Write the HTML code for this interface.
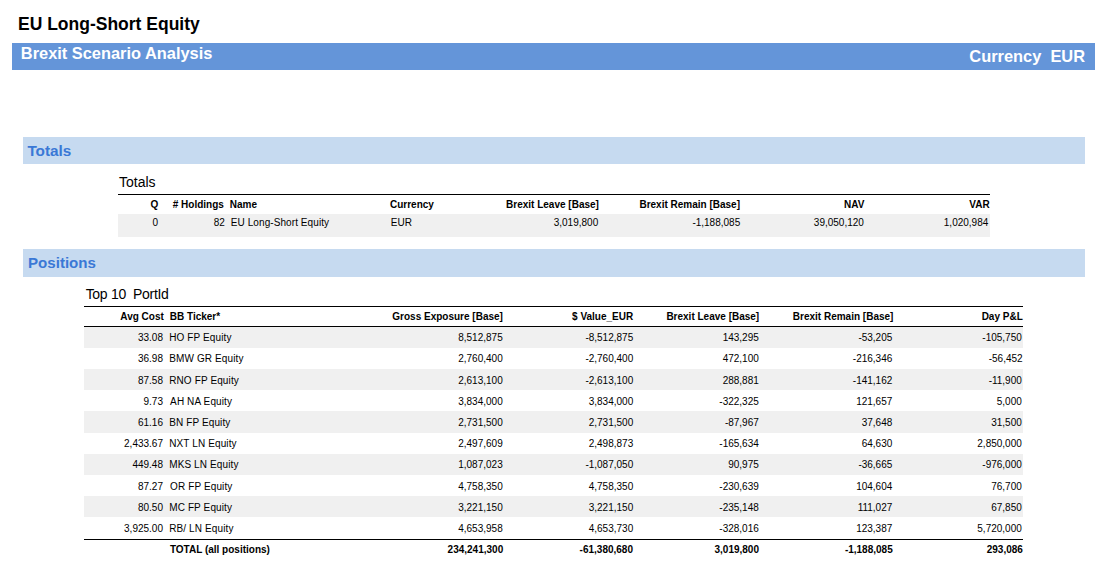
<!DOCTYPE html><html><head><meta charset="utf-8"><title>EU Long-Short Equity</title><style>
html,body{margin:0;padding:0;background:#fff;width:1107px;height:584px;overflow:hidden;position:relative}
.t{position:absolute;white-space:pre;font-family:"Liberation Sans",sans-serif;color:#000}
.r10{font-size:10px;line-height:12px}
.b10{font-size:10px;line-height:12px;font-weight:bold}
.r14{font-size:14px;line-height:16px}
.b15{font-size:15px;line-height:18px;font-weight:bold}
.b165{font-size:16.5px;line-height:18px;font-weight:bold}
.b18{font-size:18px;line-height:20px;font-weight:bold}
.k{position:absolute}
</style></head><body>
<div class="k" style="left:12px;top:43px;width:1083px;height:27px;background:#6495d9"></div>
<div class="k" style="left:23px;top:137px;width:1062px;height:27px;background:#c6daf0"></div>
<div class="k" style="left:118px;top:194px;width:872px;height:1px;background:#000"></div>
<div class="k" style="left:118px;top:214px;width:872px;height:23px;background:#f0f0f0"></div>
<div class="k" style="left:23px;top:249px;width:1062px;height:28px;background:#c6daf0"></div>
<div class="k" style="left:84px;top:306px;width:939px;height:1px;background:#000"></div>
<div class="k" style="left:84px;top:326px;width:939px;height:1px;background:#000"></div>
<div class="k" style="left:84px;top:327px;width:939px;height:21px;background:#f0f0f0"></div>
<div class="k" style="left:84px;top:369px;width:939px;height:21px;background:#f0f0f0"></div>
<div class="k" style="left:84px;top:411px;width:939px;height:22px;background:#f0f0f0"></div>
<div class="k" style="left:84px;top:454px;width:939px;height:21px;background:#f0f0f0"></div>
<div class="k" style="left:84px;top:496px;width:939px;height:21px;background:#f0f0f0"></div>
<div class="k" style="left:84px;top:539px;width:939px;height:1px;background:#000"></div>
<div class="t b18" style="left:18.00px;top:14px;font-size:17.5px">EU Long-Short Equity</div>
<div class="t b165" style="left:20.80px;top:44px;color:#fff;font-size:16.4px">Brexit Scenario Analysis</div>
<div class="t b165" style="right:22.00px;top:47px;color:#fff;font-size:16.4px">Currency&nbsp;&nbsp;EUR</div>
<div class="t b15" style="left:27.40px;top:142px;color:#3a78d6;font-size:15.3px">Totals</div>
<div class="t r14" style="left:119.00px;top:174px;">Totals</div>
<div class="t b10" style="right:948.70px;top:199px;">Q</div>
<div class="t b10" style="right:883.10px;top:199px;"># Holdings</div>
<div class="t b10" style="left:229.80px;top:199px;">Name</div>
<div class="t b10" style="left:390.00px;top:199px;">Currency</div>
<div class="t b10" style="right:508.10px;top:199px;">Brexit Leave [Base]</div>
<div class="t b10" style="right:367.00px;top:199px;">Brexit Remain [Base]</div>
<div class="t b10" style="right:242.70px;top:199px;">NAV</div>
<div class="t b10" style="right:117.40px;top:199px;">VAR</div>
<div class="t r10" style="right:948.90px;top:217px;">0</div>
<div class="t r10" style="right:882.20px;top:217px;">82</div>
<div class="t r10" style="left:230.80px;top:217px;letter-spacing:0.08px">EU Long-Short Equity</div>
<div class="t r10" style="left:390.80px;top:217px;">EUR</div>
<div class="t r10" style="right:508.80px;top:217px;">3,019,800</div>
<div class="t r10" style="right:366.80px;top:217px;">-1,188,085</div>
<div class="t r10" style="right:243.10px;top:217px;">39,050,120</div>
<div class="t r10" style="right:118.70px;top:217px;">1,020,984</div>
<div class="t b15" style="left:28.00px;top:254px;color:#3a78d6;font-size:15.1px">Positions</div>
<div class="t r14" style="left:85.65px;top:286px;letter-spacing:-0.3px">Top 10&nbsp;&nbsp;PortId</div>
<div class="t b10" style="right:943.20px;top:311px;">Avg Cost</div>
<div class="t b10" style="left:169.75px;top:311px;">BB Ticker*</div>
<div class="t b10" style="right:604.10px;top:311px;">Gross Exposure [Base]</div>
<div class="t b10" style="right:473.80px;top:311px;">$ Value_EUR</div>
<div class="t b10" style="right:347.80px;top:311px;">Brexit Leave [Base]</div>
<div class="t b10" style="right:213.60px;top:311px;">Brexit Remain [Base]</div>
<div class="t b10" style="right:84.25px;top:311px;">Day P&amp;L</div>
<div class="t r10" style="right:944.00px;top:332px;">33.08</div>
<div class="t r10" style="left:169.20px;top:332px;letter-spacing:0.12px">HO FP Equity</div>
<div class="t r10" style="right:604.30px;top:332px;">8,512,875</div>
<div class="t r10" style="right:473.80px;top:332px;">-8,512,875</div>
<div class="t r10" style="right:348.20px;top:332px;">143,295</div>
<div class="t r10" style="right:214.70px;top:332px;">-53,205</div>
<div class="t r10" style="right:85.20px;top:332px;">-105,750</div>
<div class="t r10" style="right:944.00px;top:353px;">36.98</div>
<div class="t r10" style="left:169.20px;top:353px;letter-spacing:0.12px">BMW GR Equity</div>
<div class="t r10" style="right:604.30px;top:353px;">2,760,400</div>
<div class="t r10" style="right:473.80px;top:353px;">-2,760,400</div>
<div class="t r10" style="right:348.20px;top:353px;">472,100</div>
<div class="t r10" style="right:214.70px;top:353px;">-216,346</div>
<div class="t r10" style="right:84.40px;top:353px;">-56,452</div>
<div class="t r10" style="right:944.00px;top:375px;">87.58</div>
<div class="t r10" style="left:169.20px;top:375px;letter-spacing:0.12px">RNO FP Equity</div>
<div class="t r10" style="right:604.30px;top:375px;">2,613,100</div>
<div class="t r10" style="right:473.80px;top:375px;">-2,613,100</div>
<div class="t r10" style="right:348.20px;top:375px;">288,881</div>
<div class="t r10" style="right:214.70px;top:375px;">-141,162</div>
<div class="t r10" style="right:85.20px;top:375px;">-11,900</div>
<div class="t r10" style="right:944.00px;top:396px;">9.73</div>
<div class="t r10" style="left:170.10px;top:396px;letter-spacing:0.12px">AH NA Equity</div>
<div class="t r10" style="right:604.30px;top:396px;">3,834,000</div>
<div class="t r10" style="right:473.80px;top:396px;">3,834,000</div>
<div class="t r10" style="right:348.20px;top:396px;">-322,325</div>
<div class="t r10" style="right:214.70px;top:396px;">121,657</div>
<div class="t r10" style="right:85.20px;top:396px;">5,000</div>
<div class="t r10" style="right:944.00px;top:417px;">61.16</div>
<div class="t r10" style="left:169.20px;top:417px;letter-spacing:0.12px">BN FP Equity</div>
<div class="t r10" style="right:604.30px;top:417px;">2,731,500</div>
<div class="t r10" style="right:473.80px;top:417px;">2,731,500</div>
<div class="t r10" style="right:348.20px;top:417px;">-87,967</div>
<div class="t r10" style="right:214.70px;top:417px;">37,648</div>
<div class="t r10" style="right:85.20px;top:417px;">31,500</div>
<div class="t r10" style="right:944.00px;top:438px;">2,433.67</div>
<div class="t r10" style="left:169.20px;top:438px;letter-spacing:0.12px">NXT LN Equity</div>
<div class="t r10" style="right:604.30px;top:438px;">2,497,609</div>
<div class="t r10" style="right:473.80px;top:438px;">2,498,873</div>
<div class="t r10" style="right:348.20px;top:438px;">-165,634</div>
<div class="t r10" style="right:214.70px;top:438px;">64,630</div>
<div class="t r10" style="right:85.20px;top:438px;">2,850,000</div>
<div class="t r10" style="right:944.00px;top:459px;">449.48</div>
<div class="t r10" style="left:169.20px;top:459px;letter-spacing:0.12px">MKS LN Equity</div>
<div class="t r10" style="right:604.30px;top:459px;">1,087,023</div>
<div class="t r10" style="right:473.80px;top:459px;">-1,087,050</div>
<div class="t r10" style="right:348.20px;top:459px;">90,975</div>
<div class="t r10" style="right:214.70px;top:459px;">-36,665</div>
<div class="t r10" style="right:85.20px;top:459px;">-976,000</div>
<div class="t r10" style="right:944.00px;top:481px;">87.27</div>
<div class="t r10" style="left:170.10px;top:481px;letter-spacing:0.12px">OR FP Equity</div>
<div class="t r10" style="right:604.30px;top:481px;">4,758,350</div>
<div class="t r10" style="right:473.80px;top:481px;">4,758,350</div>
<div class="t r10" style="right:348.20px;top:481px;">-230,639</div>
<div class="t r10" style="right:214.70px;top:481px;">104,604</div>
<div class="t r10" style="right:85.20px;top:481px;">76,700</div>
<div class="t r10" style="right:944.00px;top:502px;">80.50</div>
<div class="t r10" style="left:169.20px;top:502px;letter-spacing:0.12px">MC FP Equity</div>
<div class="t r10" style="right:604.30px;top:502px;">3,221,150</div>
<div class="t r10" style="right:473.80px;top:502px;">3,221,150</div>
<div class="t r10" style="right:348.20px;top:502px;">-235,148</div>
<div class="t r10" style="right:214.70px;top:502px;">111,027</div>
<div class="t r10" style="right:85.20px;top:502px;">67,850</div>
<div class="t r10" style="right:944.00px;top:523px;">3,925.00</div>
<div class="t r10" style="left:169.20px;top:523px;letter-spacing:0.12px">RB/ LN Equity</div>
<div class="t r10" style="right:604.30px;top:523px;">4,653,958</div>
<div class="t r10" style="right:473.80px;top:523px;">4,653,730</div>
<div class="t r10" style="right:348.20px;top:523px;">-328,016</div>
<div class="t r10" style="right:214.70px;top:523px;">123,387</div>
<div class="t r10" style="right:85.20px;top:523px;">5,720,000</div>
<div class="t b10" style="left:169.90px;top:544px;">TOTAL (all positions)</div>
<div class="t b10" style="right:603.80px;top:544px;">234,241,300</div>
<div class="t b10" style="right:474.00px;top:544px;">-61,380,680</div>
<div class="t b10" style="right:348.00px;top:544px;">3,019,800</div>
<div class="t b10" style="right:214.30px;top:544px;">-1,188,085</div>
<div class="t b10" style="right:84.10px;top:544px;">293,086</div>
</body></html>
